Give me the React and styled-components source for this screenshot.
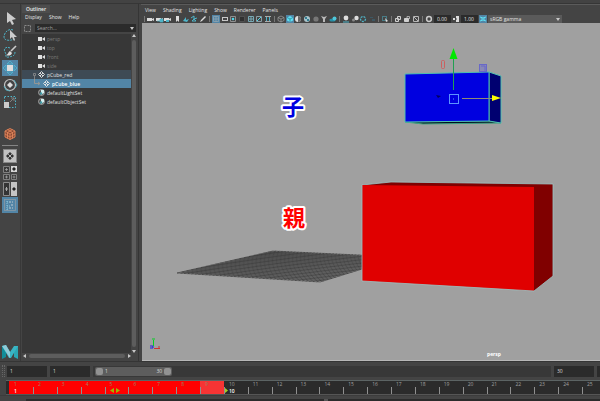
import React from "react"
import styled, { createGlobalStyle } from "styled-components"

const GlobalStyle = createGlobalStyle`
    * {
        box-sizing: border-box;
    }

    body {
        background: #444444;
        color: #dcdcdc;
        font-family: "Open Sans", "Noto Sans", sans-serif;
        font-size: 5px;
        line-height: 8px;
        margin: 0;
    }

    button, input, select {
        border: 0;
        border-radius: 0;
        color: inherit;
        font: inherit;
        margin: 0;
        padding: 0;
    }

    svg {
        display: block;
    }
`

// app frame
const Window = styled.div`
    display: flex;
    flex-direction: column;
    height: 100vh;
    overflow: hidden;
`

const TopStrip = styled.div`
    background: #434343;
    border-bottom: 1px solid #363636;
    flex: none;
    height: 4px;
`

const Workspace = styled.main`
    display: flex;
    flex: 1;
    min-height: 0;
`

// left tool box
const ToolBox = styled.nav`
    align-items: center;
    border-right: 1px solid #383838;
    display: flex;
    flex: none;
    flex-direction: column;
    padding: 5px 0 2px;
    width: 21px;
`

const ToolButton = styled.button`
    background: ${ props => props.$active ? "#5285a6" : "transparent" };
    flex: none;
    height: ${ props => props.$size || 17 }px;
    width: 16px;
`

const ToolSpace = styled.div`
    height: 15px;
`

const ToolLine = styled.hr`
    background: #858585;
    border: 0;
    height: 1px;
    margin: 3px 0 1px;
    width: 16px;
`

const Logo = styled.div`
    margin-top: auto;
`

// outliner
const OutlinerPanel = styled.section`
    border-right: 1px solid #353535;
    display: flex;
    flex: none;
    flex-direction: column;
    padding: 1px 1px 3px;
    width: 118px;
`

const Tab = styled.h2`
    align-self: flex-start;
    background: #4d4d4d;
    color: #eeeeee;
    font-size: 5px;
    font-weight: 600;
    margin: 0;
    padding: 0 4px;
`

const Menu = styled.div`
    display: flex;
    flex: none;
    gap: 7px;
    padding: 0 3px;
`

const MenuButton = styled.button`
    background: transparent;
    color: #e4e4e4;
`

const SearchRow = styled.label`
    align-items: center;
    display: flex;
    gap: 4px;
    padding: 3px 1px 2px 2px;
`

const SearchBox = styled.div`
    align-items: center;
    background: #2b2b2b;
    display: flex;
    flex: 1;
    height: 8px;
    padding: 0 2px;
`

const SearchInput = styled.input`
    background: transparent;
    flex: 1;
    min-width: 0;
    outline: 0;

    &::placeholder {
        color: #a0a0a0;
    }
`

const TreeArea = styled.div`
    display: flex;
    flex: 1;
    min-height: 0;
`

const Tree = styled.ul`
    background: #373737;
    flex: 1;
    list-style: none;
    margin: 0;
    padding: 0;
`

const TreeItem = styled.li`
    align-items: center;
    background: ${ props => props.$selected ? "#5285a6" : props.$parent ? "#3e4a55" : "transparent" };
    color: ${ props => props.$dim ? "#7a7a7a" : props.$selected ? "#ffffff" : "#e0e0e0" };
    display: flex;
    font-weight: ${ props => props.$selected ? 600 : 400 };
    gap: 2px;
    height: 9px;
    padding-left: ${ props => props.$branch ? 11 : 16 }px;
`

const ScrollBar = styled.div`
    align-items: center;
    display: flex;
    flex-direction: ${ props => props.$vertical ? "column" : "row" };
    flex: none;
    gap: 2px;
    padding: ${ props => props.$vertical ? "0 1px" : "1px 6px 0 1px" };
`

const ScrollThumb = styled.div`
    background: #5d5d5d;
    border-radius: 2px;
    flex: 1;
    min-height: 4px;
    min-width: 4px;
`

// 3d panel
const ScenePanel = styled.section`
    border-top: 1px solid #5b5b5b;
    display: flex;
    flex: 1;
    flex-direction: column;
    margin-left: 2px;
    min-width: 0;
    padding-left: 1px;
    padding-top: 1px;
`

const SceneTools = styled.div`
    align-items: center;
    display: flex;
    flex: none;
    gap: 2px;
    height: 9px;
    padding-left: 2px;
`

const ToolGroup = styled.div`
    display: flex;
    flex: none;
    justify-content: space-between;
    width: ${ props => props.$width }px;
`

const ColorTools = styled.div`
    display: flex;
    gap: 1px;
`

const Divider = styled.span`
    background: #777777;
    height: 6px;
    width: 1px;
`

const SmallButton = styled.button`
    background: ${ props => props.$active ? "#5285a6" : "transparent" };
    height: 8px;
    width: 8px;
`

const NumberInput = styled.input`
    background: #2b2b2b;
    color: #e0e0e0;
    height: 8px;
    padding-left: 3px;
    width: 17px;
`

const SelectBox = styled.div`
    align-items: center;
    background: #5a5a5a;
    display: flex;
    padding-right: 2px;
    width: 74px;
`

const ColorSelect = styled.select`
    appearance: none;
    background: transparent;
    color: #e4e4e4;
    flex: 1;
    height: 8px;
    padding-left: 2px;
`

const Scene = styled.div`
    background: #a0a0a0;
    border-bottom: 1px solid #b8b8b8;
    flex: 1;
    min-height: 0;

    svg {
        height: 100%;
        width: 100%;
    }
`

const SceneText = styled.text`
    fill: ${ props => props.$color };
    font-family: "Noto Sans CJK JP", sans-serif;
    font-size: 22px;
    font-weight: 700;
    paint-order: stroke;
    stroke: #ffffff;
    stroke-linejoin: round;
    stroke-width: 4px;
    text-anchor: middle;
`

const CameraName = styled.text`
    fill: #ffffff;
    font-size: 5px;
    font-weight: 700;
    text-anchor: middle;
`

// playback range
const RangeRow = styled.div`
    align-items: center;
    border-top: 1px solid #353535;
    display: flex;
    flex: none;
    gap: 3px;
    height: 19px;
    padding-left: 2px;
`

const Grip = styled.span`
    border-left: 1px dotted #666666;
    border-right: 1px dotted #666666;
    height: 12px;
    margin-right: -1px;
    width: 3px;
`

const FrameInput = styled.input`
    background: #2b2b2b;
    flex: none;
    height: 11px;
    padding-left: 3px;
    width: 40px;
`

const RangeTrack = styled.div`
    background: #383838;
    flex: 1;
    height: 11px;
    padding: 1px 2px;
`

const RangeBar = styled.div`
    align-items: center;
    background: #5d5d5d;
    border-radius: 2px;
    display: flex;
    gap: 2px;
    height: 9px;
    padding: 0 1px;
    width: 17%;
`

const RangeHandle = styled.button`
    background: #929292;
    border-radius: 2px;
    height: 7px;
    width: 7px;
`

const RangeEnd = styled.span`
    margin-left: auto;
`

const MoreBox = styled.span`
    background: #2b2b2b;
    height: 11px;
    width: 3px;
`

// time slider
const TimeLine = styled.div`
    background: #2b2b2b;
    border-bottom: 1px solid #555555;
    border-top: 1px solid #5c6464;
    display: flex;
    flex: none;
    height: 15px;
    margin-left: 6px;
    padding-left: 3px;
`

const Frame = styled.div`
    background: ${ props => props.$color };
    color: ${ props => props.$cached ? "#a08060" : "#a0a0a0" };
    display: grid;
    flex: ${ props => props.$share } 1 0;
    grid-template-rows: 6px 7px;
    line-height: 6px;
    min-width: 0;
    overflow: hidden;
`

const FrameNumber = styled.span`
    padding-left: 5px;
`

const Tick = styled.span`
    align-items: center;
    border-left: 1px solid ${ props => props.$hidden ? "transparent" : "#909090" };
    color: #ffffff;
    display: flex;
    font-weight: 600;
    gap: 1px;
    padding-left: ${ props => props.$gap }px;
`

const BottomStrip = styled.div`
    border-top: 1px solid #3c3c3c;
    flex: none;
    height: 6px;
    padding: 3px 0 0 26px;
`

const BottomPanel = styled.div`
    background: #2b2b2b;
    display: flex;
    height: 2px;
    justify-content: center;
    padding-left: 26px;
`

const BottomHandle = styled.span`
    background: #555555;
    width: 4px;
`

const teal = "#4fb4c8"

const toolIcons = {
    select: <path d="M5 2v11l3-2 2 4 2-1-2-4 4-1z" fill="#cccccc" />,
    lasso: <g>
        <path d="M11 3C6 1 2 6 2 10c0 4 7 4 10 2" fill="none" stroke={ teal } strokeDasharray="2 1" />
        <path d="M8 3v9l2-2 2 4 1-1-1-3h3z" fill="#cccccc" />
    </g>,
    paint: <g>
        <path d="M8 4C4 2 1 5 3 8s-1 6 4 5 6-2 6-5" fill="none" stroke={ teal } strokeDasharray="2 1" />
        <path d="M14 2L9 7" stroke="#cccccc" strokeWidth="1.6" />
        <path d="M8 7l2 2c-1 3-4 3-6 2 2 0 2-3 4-4z" fill="#dddddd" />
    </g>,
    move: <g>
        <path d="M8 1l3 3H5zM8 15l3-3H5zM1 8l3-3v6zM15 8l-3-3v6z" fill="none" stroke="#4fc0d8" strokeWidth=".7" />
        <rect x="5" y="5" width="6" height="6" fill="#dedede" />
    </g>,
    rotate: <g>
        <circle cx="8" cy="8" r="5.500" fill="none" stroke="#c4c4c4" strokeWidth="1.200" />
        <path d="M8 5l3 3-3 3-3-3z" fill="#dedede" />
        <path d="M12 3l3 5-2 3M2 9l2 4 4 1" fill="none" stroke={ teal } strokeWidth=".8" />
    </g>,
    scale: <g>
        <rect x="2.500" y="2.500" width="11" height="11" fill="none" stroke={ teal } strokeDasharray="1.500 1.500" />
        <rect x="2" y="8" width="5" height="6" fill="#cccccc" />
        <path d="M8 8l4-4M9 4h3v3" fill="none" stroke="#808080" />
    </g>,
    hex: <g stroke="#e0855a" fill="#8a4a34" strokeWidth=".9">
        <path d="M8 2.500l5 2.500v6l-5 2.500L3 11V5z" />
        <path d="M3 5l5 3 5-3M8 8v6M5.500 3.500l5 3v6M10.500 3.500l-5 3v6M3 8l5 3 5-3" fill="none" />
    </g>,
    single: <g>
        <rect x="1.500" y="1.500" width="13" height="13" fill="#c2c2c2" stroke="#888888" />
        <path d="M8 4l4 4-4 4-4-4z" fill="#333333" />
        <path d="M8 7v2M7 8h2M5.500 5.500l5 5M10.500 5.500l-5 5" stroke="#c2c2c2" strokeWidth=".8" />
    </g>,
    four: <g>
        <path d="M1.500 1.500h6v6h-6zM1.500 9.500h6v5h-6zM9.500 9.500h5v5h-5z" fill="#3b3b3b" stroke="#808080" />
        <path d="M9 1h6v6H9z" fill="#d5d5d5" />
        <path d="M4.500 3v3M3 4.500h3M4.500 10.500v3M3 12h3M12 10.500v3M10.500 12h3" stroke="#aaaaaa" strokeWidth=".7" />
        <path d="M12 2l2 2-2 2-2-2z" fill="#222222" />
    </g>,
    two: <g>
        <path d="M1.500 1.500h6v13h-6z" fill="#343434" stroke="#8c8c8c" />
        <path d="M9 1h6v14H9z" fill="#c5c5c5" />
        <path d="M4.500 6v4M3 8h3" stroke="#aaaaaa" />
        <path d="M12 6l2 2-2 2-2-2z" fill="#222222" />
    </g>,
    outliner: <g fill="none" stroke="#9ad7e8" strokeWidth=".8">
        <rect x="2.500" y="2.500" width="11" height="11" stroke="#8a9aa4" />
        <path d="M5 4v9M5 5h2M5 9h4M5 12h2" strokeDasharray="1 1" />
        <path d="M7 5h4M9 8h3M7 11h4" stroke="#dddddd" strokeDasharray="2 1" />
    </g>,
}

const camera = <path d="M0 3h5v3H0zM5 4l2-1v3L5 5z" fill="#dddddd" />

const smallIcons = {
    camera,
    cameraLock: <g>{ camera }<path d="M4 4h3v3H4zM1 6h3" fill={ teal } stroke={ teal } strokeWidth=".7" /></g>,
    cameraSet: <g>{ camera }<path d="M2 5h3v2H2z" fill={ teal } /></g>,
    bookmark: <path d="M3 1h3v6L4.500 5.500 3 7z" fill="#dddddd" />,
    plane: <path d="M1 6l3-4v3l3-1-2 3z" fill={ teal } />,
    pan: <path d="M1 3l3-2v3l3-1M2 6h4L4 4z" fill="none" stroke={ teal } />,
    pencil: <path d="M1 7l1-2 4-4 1 1-4 4z" fill="#dddddd" />,
    grid: <path d="M1.500 1.500h5v5h-5zM4 1v6M1 4h6" fill="none" stroke="#97a6b0" strokeWidth=".7" />,
    film: <path d="M1 2.500h6M1 5.500h6M1.500 2v4M6.500 2v4" stroke="#c8c8c8" />,
    gate: <g><path d="M1.500 1.500h5v5h-5z" fill="none" stroke="#8f8f8f" /><circle cx="4" cy="4" r="1.300" fill="#4ed4e8" /></g>,
    mask: <path d="M1.500 1.500h5v5h-5z" fill="#303030" stroke="#505050" />,
    chart: <path d="M1.500 1.500h5v5h-5zM4 2v4M2 4h4" fill="none" stroke="#77a9b5" />,
    action: <g><path d="M1.500 1.500h5v5h-5z" fill="none" stroke="#8a9fa6" /><path d="M2 6l4-4" stroke="#4ed4e8" /></g>,
    title: <g><path d="M1 1.500h6M1 6.500h6" stroke="#aaaaaa" /><path d="M2 2h1v4H2zM5 2h1v4H5z" fill={ teal } /></g>,
    wire: <path d="M4 1l3 1.500v3L4 7 1 5.500v-3zM1 2.500L4 4l3-1.500M4 4v3" fill="none" stroke="#a0a0a0" strokeWidth=".7" />,
    solid: <g><path d="M4 1l3 1.500v3L4 7 1 5.500v-3z" fill="#5fe0f2" /><path d="M1 2.500L4 4l3-1.500M4 4v3" fill="none" stroke="#267b91" strokeWidth=".7" /></g>,
    half: <g><circle cx="4" cy="4" r="3" fill="#dddddd" /><path d="M4 1a3 3 0 010 6z" fill="#666666" /></g>,
    texture: <g><circle cx="4" cy="4" r="3" fill="#a9c3ca" /><path d="M2 2h2v2H2zM4 4h2v2H4z" fill="#347f92" /></g>,
    ball: <circle cx="4" cy="4" r="2.600" fill="#777777" />,
    light: <path d="M1 1l3 1 3-1-2 3v3H3V4z" fill="#b8b8b8" />,
    shadow: <g><ellipse cx="3.500" cy="5" rx="3" ry="1.500" fill="#278fa6" /><circle cx="5.500" cy="3.500" r="2" fill="#4fc7da" /></g>,
    occlusion: <g><circle cx="4" cy="3" r="2.400" fill="#dddddd" /><path d="M1 7h6" stroke={ teal } /></g>,
    blur: <g><circle cx="5.500" cy="3" r="2.200" fill="#dddddd" /><circle cx="2.500" cy="5" r="1.500" fill="#888888" /></g>,
    sample: <circle cx="4" cy="4" r="2.500" fill="none" stroke={ teal } strokeWidth="1.300" strokeDasharray="2 1" />,
    depth: <path d="M2 2h3v1H2zM4 4h3v2H4z" fill="#3d5864" />,
    isolate: <g><path d="M1.500 1.500h4v4h-4z" fill="none" stroke={ teal } strokeDasharray="1 1" /><path d="M4 3l3 3-2 1z" fill="#dddddd" /></g>,
    copies: <path d="M3.500 1.500h3v3h-3zM1.500 3.500h3v3h-3z" fill="#555555" stroke="#d0d0d0" />,
    lock: <g><path d="M1.500 3.500h4v3h-4z" fill="#d0d0d0" stroke="#d0d0d0" /><path d="M4 3V1.500h2.500V4" fill="none" stroke="#a8a8a8" /></g>,
    xray: <path d="M1.500 1.500h5v5h-5zM2 2l4 4" fill="none" stroke="#b7b7b7" />,
    exposure: <circle cx="4" cy="4" r="2.400" fill="none" stroke="#cccccc" strokeWidth="1.500" />,
    contrast: <path d="M4 1h3v6H4V5l1-1-1-1zM1 3h2v2H1z" fill="#dddddd" />,
    color: <path d="M1 2l3 1 3-1M1 6l3-1 3 1M2 4h4" fill="none" stroke="#5fe0f2" />,
}

const groups = [
    { width: 60, icons: ["camera", "cameraLock", "cameraSet", "bookmark", "plane", "pan", "pencil"] },
    { width: 60, icons: ["grid", "film", "gate", "mask", "chart", "action", "title"] },
    { width: 60, icons: ["wire", "solid", "half", "texture", "ball", "light", "shadow"] },
    { width: 34, icons: ["occlusion", "blur", "sample", "depth"] },
    { width: 8, icons: ["isolate"] },
    { width: 26, icons: ["copies", "lock", "xray"] },
]

const nodeIcons = {
    camera: <path d="M0 2h4v4H0zM4 4l3-2v4z" fill="#e0e0e0" />,
    mesh: <path d="M3.500.500l3 3-3 3-3-3zM2 2l3 3M5 2L2 5" fill="none" stroke="#e8e8e8" strokeWidth=".9" />,
    set: <g>
        <circle cx="3.500" cy="3.500" r="3" fill="#555555" stroke="#b0b0b0" strokeWidth=".8" />
        <path d="M3 1h3v3L3 6z" fill="#d5f0f0" />
        <circle cx="3" cy="4.500" r="1.200" fill="#409aa5" />
    </g>,
}

const nodes = [
    { name: "persp", icon: "camera", dim: true },
    { name: "top", icon: "camera", dim: true },
    { name: "front", icon: "camera", dim: true },
    { name: "side", icon: "camera", dim: true },
    { name: "pCube_red", icon: "mesh", parent: true },
    { name: "pCube_blue", icon: "mesh", selected: true },
    { name: "defaultLightSet", icon: "set" },
    { name: "defaultObjectSet", icon: "set" },
]

const frames = Array.from({ length: 25 }, (_, i) => i + 1)

function Tool({ name, ...rest }) {
    return <ToolButton aria-label={ name } { ...rest }>
        <svg width="16" height="16" viewBox="0 0 16 16">{ toolIcons[name] }</svg>
    </ToolButton>
}

function SmallTool({ name, active }) {
    return <SmallButton aria-label={ name } $active={ active }>
        <svg width="8" height="8" viewBox="0 0 8 8">{ smallIcons[name] }</svg>
    </SmallButton>
}

// small triangle for scroll bars and drop-downs
function Arrow({ turn = 0, size = 4 }) {
    return <svg width={ size } height={ size } viewBox="0 0 4 4">
        <path d="M0 1h4L2 4z" fill="#c8c8c8" transform={ `rotate(${ turn } 2 2)` } />
    </svg>
}

function Outliner() {
    return <OutlinerPanel>
        <Tab>Outliner</Tab>

        <Menu>
            <MenuButton>Display</MenuButton>
            <MenuButton>Show</MenuButton>
            <MenuButton>Help</MenuButton>
        </Menu>

        <SearchRow>
            <svg width="7" height="7" viewBox="0 0 7 7">
                <rect x=".500" y=".500" width="6" height="6" fill="none" stroke="#888888" strokeDasharray="2 1" />
            </svg>
            <SearchBox>
                <SearchInput aria-label="Search" placeholder="Search..." />
                <Arrow />
            </SearchBox>
        </SearchRow>

        <TreeArea>
            <Tree>
                { nodes.map(node => {
                    const branch = node.parent || node.selected
                    return <TreeItem
                        key={ node.name }
                        $dim={ node.dim }
                        $parent={ node.parent }
                        $selected={ node.selected }
                        $branch={ branch }
                    >
                        { node.parent && <svg width="3" height="9" viewBox="0 0 3 9">
                            <path d="M.500 3.500h2v2h-2zM1.500 6v3" fill="none" stroke="#999999" strokeWidth=".7" />
                        </svg> }
                        { node.selected && <svg width="8" height="9" viewBox="0 0 8 9">
                            <path d="M1.500 0v4.500h5M5 3l2 1.500L5 6" fill="none" stroke="#a39a91" strokeWidth=".8" />
                        </svg> }
                        <svg width="7" height="7" viewBox="0 0 7 7">{ nodeIcons[node.icon] }</svg>
                        <span>{ node.name }</span>
                    </TreeItem>
                }) }
            </Tree>
            <ScrollBar $vertical>
                <Arrow turn={ 180 } />
                <ScrollThumb />
                <Arrow />
            </ScrollBar>
        </TreeArea>

        <ScrollBar>
            <Arrow turn={ 90 } />
            <ScrollThumb />
            <Arrow turn={ -90 } />
        </ScrollBar>
    </OutlinerPanel>
}

// ground grid, drawn between its four corners
function Ground() {
    const a = [177, 273]
    const b = [273, 251]
    const c = [401, 257]
    const d = [320, 282]
    const mix = (p, q, t) => [p[0] + (q[0] - p[0]) * t, p[1] + (q[1] - p[1]) * t].join(" ")
    const line = (p, q, r, s, n) => Array.from({ length: n + 1 }, (_, i) =>
        `M${ mix(p, q, i / n) }L${ mix(r, s, i / n) }`
    ).join("")

    return <g fill="none" stroke="#1a1a1a">
        <path d={ line(a, b, d, c, 20) } strokeWidth=".400" />
        <path d={ line(a, d, b, c, 40) } strokeWidth=".500" />
    </g>
}

function SceneView() {
    return <svg viewBox="142 23 458 337">
        <Ground />

        <g stroke="#9ac4c4" strokeWidth=".8">
            <path d="M362 185l29-3 162 2v92l-19 15z" fill="#800000" />
            <path d="M362 185l172 2v104l-172-10z" fill="#e00000" stroke="none" />
            <path d="M362 185v96l172 10" fill="none" />
        </g>

        <path d="M405 122l18 2 78-1-12-2z" fill="#001020" stroke="#40a080" />
        <path d="M489 72l12 4v47l-12-2z" fill="#000070" stroke="#50c0b0" />
        <path d="M405 74l84-2v49l-84 1z" fill="#0000e0" stroke="#50c0b0" />

        <path d="M453.500 90V58" stroke="#20a050" />
        <path d="M453.500 48l4 11h-8z" fill="#00e800" />
        <path d="M462 98.500h31" stroke="#8e8b75" />
        <path d="M492 95l9 3-9 3z" fill="#ffff00" />
        <rect x="449.500" y="94.500" width="9" height="9" fill="none" stroke="#5c94ff" />
        <path d="M453 99h1" stroke="#5c94ff" />
        <path d="M436 95l5 1-3 2z" fill="#000060" />
        <rect x="441.500" y="60.500" width="3" height="8" rx="1" fill="none" stroke="#cc6060" />
        <rect x="479.500" y="64.500" width="7" height="7" fill="#8989b5" stroke="#6868c8" />
        <path d="M481 66h4v5" fill="none" stroke="#6868c8" />

        <path d="M153.500 346v-6M152 339h3" stroke="#00d020" />
        <path d="M154 348.500h6M159 346v2" stroke="#d03030" />
        <path d="M150 346h3v2h-3" fill="none" stroke="#2020e0" />

        <SceneText x="293" y="115" $color="#0000e0">子</SceneText>
        <SceneText x="294" y="226" $color="#ff0000">親</SceneText>
        <CameraName x="494" y="356">persp</CameraName>
    </svg>
}

function TimeSlider() {
    return <TimeLine>
        { frames.map(n => <Frame
            key={ n }
            $share={ n === 25 ? 18 : 24 }
            $cached={ n < 10 }
            $color={ n < 9 ? "#ff0000" : n === 9 ? "#f63434" : "transparent" }
        >
            <FrameNumber>{ n }</FrameNumber>
            <Tick $hidden={ n === 1 } $gap={ n === 10 ? 0 : 4 }>
                { n === 1 && "1" }
                { n === 5 && <svg width="10" height="5" viewBox="0 0 10 5">
                    <path d="M4 0v5L0 2.500zM6 0v5l4-2.500z" fill="#a0b800" />
                </svg> }
                { n === 10 && <>
                    <svg width="3" height="5" viewBox="0 0 3 5"><path d="M0 0l3 2.500L0 5z" fill="#a8d020" /></svg>
                    10
                </> }
            </Tick>
        </Frame>) }
    </TimeLine>
}

export default function App() {
    return <Window>
        <GlobalStyle />
        <TopStrip />

        <Workspace>
            <ToolBox>
                <Tool name="select" />
                <Tool name="lasso" />
                <Tool name="paint" />
                <Tool name="move" $active $size={ 16 } />
                <Tool name="rotate" />
                <Tool name="scale" />
                <ToolSpace />
                <Tool name="hex" />
                <ToolLine />
                <Tool name="single" />
                <Tool name="four" />
                <Tool name="two" $size={ 16 } />
                <Tool name="outliner" $active $size={ 16 } />
                <Logo>
                    <svg width="16" height="14" viewBox="0 0 16 14">
                        <path d="M0 1h4v11l-4 2z" fill="#128d99" />
                        <path d="M12 1h4v13l-4-2z" fill="#2aa8b5" />
                        <path d="M0 1l4-1 4 7 4-6h4L9 13H7z" fill="#39b5c4" />
                        <path d="M0 1l4-1 4 7v6z" fill="#8fcbd8" />
                    </svg>
                </Logo>
            </ToolBox>

            <Outliner />

            <ScenePanel>
                <Menu>
                    { ["View", "Shading", "Lighting", "Show", "Renderer", "Panels"].map(item =>
                        <MenuButton key={ item }>{ item }</MenuButton>
                    ) }
                </Menu>

                <SceneTools>
                    { groups.map((group, i) => <React.Fragment key={ i }>
                        <Divider />
                        <ToolGroup $width={ group.width }>
                            { group.icons.map(name =>
                                <SmallTool key={ name } name={ name } active={ name === "grid" || name === "solid" } />
                            ) }
                        </ToolGroup>
                    </React.Fragment>) }
                    <Divider />
                    <ColorTools>
                        <SmallTool name="exposure" />
                        <NumberInput aria-label="Exposure" defaultValue="0.00" />
                        <SmallTool name="contrast" />
                        <NumberInput aria-label="Gamma" defaultValue="1.00" />
                        <SmallTool name="color" active />
                        <SelectBox>
                            <ColorSelect aria-label="View transform">
                                <option>sRGB gamma</option>
                            </ColorSelect>
                            <Arrow />
                        </SelectBox>
                    </ColorTools>
                </SceneTools>

                <Scene>
                    <SceneView />
                </Scene>
            </ScenePanel>
        </Workspace>

        <RangeRow>
            <Grip />
            <FrameInput aria-label="Animation start" defaultValue="1" />
            <FrameInput aria-label="Playback start" defaultValue="1" />
            <RangeTrack>
                <RangeBar>
                    <RangeHandle aria-label="Range start" />
                    <span>1</span>
                    <RangeEnd>30</RangeEnd>
                    <RangeHandle aria-label="Range end" />
                </RangeBar>
            </RangeTrack>
            <FrameInput aria-label="Playback end" defaultValue="30" />
            <MoreBox />
        </RangeRow>

        <TimeSlider />

        <BottomStrip>
            <BottomPanel>
                <BottomHandle />
            </BottomPanel>
        </BottomStrip>
    </Window>
}
